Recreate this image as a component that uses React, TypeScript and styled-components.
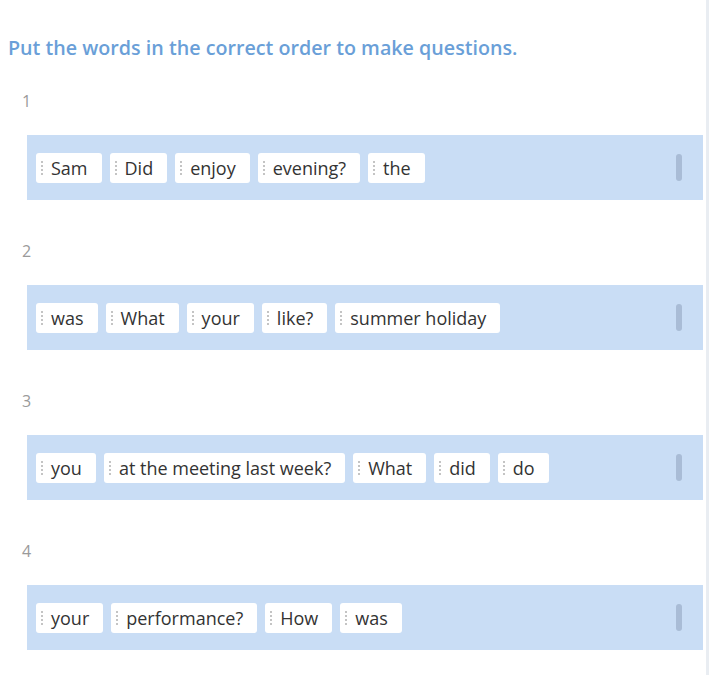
import styled, { createGlobalStyle } from "styled-components"

const GlobalStyle = createGlobalStyle`
	html, body {
		margin: 0;
		padding: 0;
		background: #ffffff;
		font-family: "Open Sans", "Liberation Sans", sans-serif;
	}
`

const questions: string[][] = [
	["Sam", "Did", "enjoy", "evening?", "the"],
	["was", "What", "your", "like?", "summer holiday"],
	["you", "at the meeting last week?", "What", "did", "do"],
	["your", "performance?", "How", "was"],
]

const App = () => {

	return (

		<Page>

			<GlobalStyle />

			<Title>Put the words in the correct order to make questions.</Title>

			<List>

				{questions.map((words, i) => (

					<Item key={i}>

						<Number>{i + 1}</Number>

						<DropZone>

							{words.map((w) => (
								<Chip key={w}>
									<Handle />
									{w}
								</Chip>
							))}

							<Grip />

						</DropZone>

					</Item>

				))}

			</List>

		</Page>

	)

}

const Page = styled.div`
	width: 709px;
	min-height: 675px;
	box-sizing: border-box;
	border-right: 3px solid #e9edf2;
	padding: 34px 0 0 8px;
`

const Title = styled.h1`
	margin: 0;
	font-size: 19.7px;
	line-height: 28px;
	font-weight: 600;
	color: #6a9fd8;
`

const List = styled.div`
	display: flex;
	flex-direction: column;
	gap: 40px;
	margin-top: 28px;
`

const Item = styled.div`
	display: flex;
	flex-direction: column;
	gap: 23px;
`

const Number = styled.div`
	padding-left: 14px;
	font-size: 16px;
	line-height: 22px;
	color: #9a9a9a;
`

const DropZone = styled.div`
	display: flex;
	align-items: center;
	gap: 8px;
	height: 65px;
	margin-left: 19px;
	margin-right: 3px;
	padding: 0 21px 0 9px;
	background: #c9ddf5;
`

const Chip = styled.div`
	display: flex;
	align-items: center;
	height: 30px;
	padding: 0 14px 0 5px;
	border-radius: 3px;
	background: #ffffff;
	font-size: 18px;
	line-height: 28px;
	color: #333333;
	white-space: nowrap;
`

const Handle = styled.span`
	width: 0;
	height: 14px;
	margin-right: 8px;
	border-left: 2px dotted #c4c4c4;
`

const Grip = styled.div`
	width: 6px;
	height: 27px;
	margin-left: auto;
	border-radius: 3px;
	background: #a9bcd6;
`

export default App
